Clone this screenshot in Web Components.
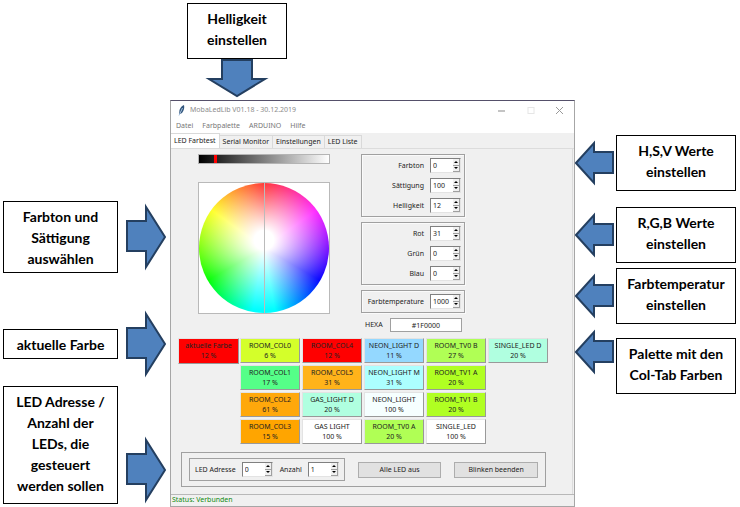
<!DOCTYPE html>
<html lang="de">
<head>
<meta charset="utf-8">
<title>MobaLedLib Farbtest</title>
<style>
  html, body { margin: 0; background: #fff; }
  body { font-family: "Noto Sans", "Open Sans", sans-serif; }
</style>
</head>
<body>
<guide-page></guide-page>
<script>
const define = (name, html, setup) => customElements.define(name, class extends HTMLElement {
  connectedCallback() {
    if (this.shadowRoot) return;
    const root = this.attachShadow({ mode: "open" });
    root.innerHTML = "<style>*{box-sizing:border-box}</style>" +
      (typeof html === "function" ? html(this) : html);
    if (setup) setup(this, root);
  }
});

/* Block arrow; direction is right, left or down */
define("block-arrow", el => {
  const shapes = {
    right: [42, 68, "2,18 21,18 21,4 40,34 21,64 21,48 2,48"],
    left: [40, 47, "38,12 19,12 19,3 1,23 19,43 19,33 38,33"],
    down: [66, 39, "18,1 48,1 48,20 61,20 33,37 5,20 18,20"]
  };
  const [w, h, points] = shapes[el.getAttribute("direction")];
  return `<style>:host{display:block;flex:none}svg{display:block}</style>
  <svg width="${w}" height="${h}" viewBox="0 0 ${w} ${h}" aria-hidden="true">
    <polygon points="${points}" fill="#4f81bd" stroke="#243f60" stroke-width="2"/>
  </svg>`;
});

define("note-box", `<style>
  :host{display:block;box-sizing:border-box;border:1px solid #000;background:#fff;padding:4px 2px 3px;
    font:700 14px/21px Lato,sans-serif;color:#000;text-align:center}
  </style><slot></slot>`);

define("spin-box", el => `<style>
  :host{display:grid;grid-template-columns:1fr 31px;column-gap:6px;align-items:center}
  label{text-align:right;white-space:nowrap}
  .box{display:flex;height:15px;background:#fff;border:1px solid;border-color:#808080 #e3e3e3 #e3e3e3 #808080}
  input{flex:1;min-width:0;width:0;border:0;padding:0 0 0 2px;background:none;font:inherit;color:inherit;outline:0}
  .steps{display:flex;flex-direction:column;width:7px;flex:none}
  button{flex:1;display:flex;align-items:center;justify-content:center;min-height:0;padding:0;border:0;
    border-right:1px solid #a0a0a0;border-bottom:1px solid #a0a0a0;background:#f0f0f0}
  svg{display:block}
  </style>
  <label for="v">${el.getAttribute("label")}</label>
  <span class="box"><input id="v" inputmode="numeric" value="${el.getAttribute("value")}">
  <span class="steps">
    <button type="button" aria-label="Erhöhen"><svg width="4" height="2"><path d="M0 2L2 0L4 2z"/></svg></button>
    <button type="button" aria-label="Verringern"><svg width="4" height="2"><path d="M0 0L2 2L4 0z"/></svg></button>
  </span></span>`,
  (el, root) => {
    const input = root.querySelector("input");
    root.querySelectorAll("button").forEach((b, i) =>
      b.addEventListener("click", () => { input.value = Math.max(0, Number(input.value) + (i ? -1 : 1)); }));
  });

define("field-group", `<style>
  :host{display:flex;flex-direction:column;gap:5px;border:1px solid #a0a0a0;padding:3px;
    box-shadow:inset 1px 1px #fafafa,1px 1px #fafafa}
  </style><slot></slot>`);

define("color-tile", el => `<style>
  :host{display:grid}
  button{font:inherit;color:#222;line-height:10px;padding:0;border:1px solid;
    border-color:#e3e3e3 #999 #999 #e3e3e3;background:${el.getAttribute("color")};white-space:nowrap;overflow:hidden}
  span{display:block}
  </style>
  <button type="button"><span>${el.getAttribute("name")}</span><span>${el.getAttribute("level")} %</span></button>`);

define("brightness-bar", `<style>
  :host{display:block}
  input{display:block;appearance:none;width:100%;height:10px;margin:0;border:1px solid #b4b4b4;
    background:linear-gradient(90deg,#000,#fff)}
  input::-webkit-slider-thumb{appearance:none;width:3px;height:8px;background:#f00;border:0}
  </style><input type="range" min="0" max="100" value="12" aria-label="Helligkeit">`);

define("color-wheel", `<style>
  :host{display:block;aspect-ratio:1;background:#fff;border:1px solid #b9b9b9}
  div{height:100%;border-radius:50%;
    background:linear-gradient(#bbb,#bbb) center/1px 100% no-repeat,
      radial-gradient(circle 70px at 50% 44%,#fff 14%,transparent 100%),
      conic-gradient(#f00,#f0f 54deg,#00f 120deg,#0ff 170deg,#0ff 190deg,#0f0 240deg,#ff0 306deg,#f00)}
  </style><div role="img" aria-label="Farbkreis"></div>`);

define("title-bar", `<style>
  :host{display:flex;align-items:center;height:18px;padding:0 10px 0 7px;background:#fff;color:#8c8c8c}
  span{flex:1;padding-left:5px}
  .controls{display:flex;gap:19px}
  button{border:0;padding:0;background:none;display:block}
  svg{display:block}
  </style>
  <svg width="7" height="11" viewBox="0 0 7 11"><path d="M1 10L1.500 5Q3 1 6 0Q7 4 4 8L2 9z" fill="#31557c"/><path d="M1 10.500L4.500 3" stroke="#a9c3df" fill="none"/></svg>
  <span>MobaLedLib V01.18 - 30.12.2019</span>
  <div class="controls">
    <button type="button" aria-label="Minimieren"><svg width="10" height="9"><path d="M1 5h7" stroke="#c4c4c4" stroke-width="2"/></svg></button>
    <button type="button" aria-label="Maximieren"><svg width="10" height="9"><rect x="2" y="1.500" width="6" height="6" fill="none" stroke="#e6e6e6"/></svg></button>
    <button type="button" aria-label="Schließen"><svg width="9" height="9"><path d="M1 1L8 8M8 1L1 8" stroke="#999"/></svg></button>
  </div>`);

define("menu-bar", `<style>
  :host{display:flex;gap:9px;height:14px;padding-left:5px;background:#fff}
  button{border:0;padding:0;background:none;font:inherit;color:#777}
  </style>
  <button type="button">Datei</button><button type="button">Farbpalette</button>
  <button type="button">ARDUINO</button><button type="button">Hilfe</button>`);

define("tab-strip", `<style>
  :host{display:flex;align-items:flex-end;height:16px;border-bottom:1px solid #dcdcdc}
  button{height:13px;padding:0 3px;border:1px solid #d9d9d9;border-left:0;border-bottom:0;
    background:#f0f0f0;font:inherit;line-height:12px;color:#1c1c1c}
  [aria-selected=true]{height:15px;background:#fff}
  </style>
  <button type="button" role="tab" aria-selected="true">LED Farbtest</button>
  <button type="button" role="tab" aria-selected="false">Serial Monitor</button>
  <button type="button" role="tab" aria-selected="false">Einstellungen</button>
  <button type="button" role="tab" aria-selected="false">LED Liste</button>`);

define("hex-field", `<style>
  :host{display:flex;align-items:center;gap:7px;padding:0 3px 0 4px}
  input{flex:1;min-width:0;height:14px;padding:0;border:1px solid #a0a0a0;background:#fff;
    font:inherit;color:inherit;text-align:center}
  </style><label for="h">HEXA</label><input id="h" value="#1F0000">`);

define("color-palette", () => {
  const colors = [
    ["ROOM_COL0", 6, "#d4ff2a"], ["ROOM_COL1", 17, "#55ff88"], ["ROOM_COL2", 61, "#ffa80b"], ["ROOM_COL3", 15, "#ffa500"],
    ["ROOM_COL4", 12, "#ff0000"], ["ROOM_COL5", 31, "#ffb31a"], ["GAS_LIGHT D", 20, "#b0ffe0"], ["GAS LIGHT", 100, "#ffffff"],
    ["NEON_LIGHT D", 11, "#94d8ff"], ["NEON_LIGHT M", 31, "#acffff"], ["NEON_LIGHT", 100, "#f6ffff"], ["ROOM_TV0 A", 20, "#b0ff55"],
    ["ROOM_TV0 B", 27, "#b0ff55"], ["ROOM_TV1 A", 20, "#b0ff22"], ["ROOM_TV1 B", 20, "#b0ff22"], ["SINGLE_LED", 100, "#ffffff"],
    ["SINGLE_LED D", 20, "#b0ffe0"]
  ];
  return `<style>
  :host{display:flex;align-items:flex-start;gap:1px}
  .current{flex:none;width:61px;height:26px}
  .grid{display:grid;grid-auto-flow:column;grid-template-rows:repeat(4,25px);grid-auto-columns:60px;gap:2px}
  </style>
  <color-tile class="current" name="aktuelle Farbe" level="12" color="#ff0000"></color-tile>
  <div class="grid">${colors.map(([n, l, c]) => `<color-tile name="${n}" level="${l}" color="${c}"></color-tile>`).join("")}</div>`;
});

define("led-controls", `<style>
  :host{display:flex;align-items:center;border:1px solid #a0a0a0;padding:5px 7px;gap:13px}
  .address{display:flex;gap:7px;border:1px solid #a0a0a0;padding:3px 5px}
  button{flex:1;height:16px;padding:0;border:1px solid #adadad;background:#e1e1e1;font:inherit;color:inherit}
  </style>
  <div class="address"><spin-box label="LED Adresse" value="0"></spin-box><spin-box label="Anzahl" value="1"></spin-box></div>
  <button type="button">Alle LED aus</button><button type="button">Blinken beenden</button>`);

define("app-window", `<style>
  :host{display:flex;flex-direction:column;box-sizing:border-box;min-width:0;border:1px solid #a6a6a6;border-top-color:#55506a;
    background:#f0f0f0;font-size:7px;line-height:10px;color:#1c1c1c}
  .pane{flex:1;padding:5px 26px 7px 7px;border-right:1px solid #dcdcdc;margin-right:1px}
  .top{display:grid;grid-template-columns:132px 104px;column-gap:31px;padding-left:20px}
  .picker{display:flex;flex-direction:column;gap:18px}
  .values{display:flex;flex-direction:column;gap:5px}
  color-palette{margin:6px 0 8px}
  led-controls{margin-left:3px}
  .status{border-top:1px solid #b8b8b8;padding:0 1px 1px;color:#108a10}
  </style>
  <title-bar></title-bar><menu-bar></menu-bar><tab-strip></tab-strip>
  <div class="pane">
    <div class="top">
      <div class="picker"><brightness-bar></brightness-bar><color-wheel></color-wheel></div>
      <div class="values">
        <field-group><spin-box label="Farbton" value="0"></spin-box><spin-box label="Sättigung" value="100"></spin-box><spin-box label="Helligkeit" value="12"></spin-box></field-group>
        <field-group><spin-box label="Rot" value="31"></spin-box><spin-box label="Grün" value="0"></spin-box><spin-box label="Blau" value="0"></spin-box></field-group>
        <field-group><spin-box label="Farbtemperature" value="1000"></spin-box></field-group>
        <hex-field></hex-field>
      </div>
    </div>
    <color-palette></color-palette>
    <led-controls></led-controls>
  </div>
  <div class="status">Status: Verbunden</div>`);

define("guide-page", `<style>
  :host{display:grid;grid-template-columns:170px minmax(0,1fr) 165px;grid-template-rows:100px auto}
  .left,.right{grid-row:1/3;display:flex;flex-direction:column}
  .left{grid-column:1;padding:201px 3px 0}
  .right{grid-column:3;padding-top:135px}
  .above{grid-column:2;grid-row:1;padding:3px 17px 0;display:flex;flex-direction:column;align-items:center;width:134px}
  .above note-box{width:100px;min-height:56px}
  app-window{grid-column:2;grid-row:2}
  .row{display:flex;align-items:center}
  .left .row{gap:7px}
  .left note-box{width:115px}
  .left .row:nth-child(2){margin:37px 0 8px}
  .left .row:nth-child(3){align-items:flex-end}
  .left .row:nth-child(3) note-box{min-height:118px}
  .right .row{gap:1px}
  .right note-box{width:120px;min-height:56px}
  .right .row:nth-child(2){margin:16px 0 5px}
  .right .row:nth-child(4){align-items:flex-start;margin-top:5px}
  .right .row:nth-child(4) note-box{margin-top:9px}
  </style>
  <div class="left">
    <div class="row"><note-box>Farbton und<br>Sättigung<br>auswählen</note-box><block-arrow direction="right"></block-arrow></div>
    <div class="row"><note-box>aktuelle Farbe</note-box><block-arrow direction="right"></block-arrow></div>
    <div class="row"><note-box>LED Adresse /<br>Anzahl der<br>LEDs, die<br>gesteuert<br>werden sollen</note-box><block-arrow direction="right"></block-arrow></div>
  </div>
  <div class="above"><note-box>Helligkeit<br>einstellen</note-box><block-arrow direction="down"></block-arrow></div>
  <app-window></app-window>
  <div class="right">
    <div class="row"><block-arrow direction="left"></block-arrow><note-box>H,S,V Werte<br>einstellen</note-box></div>
    <div class="row"><block-arrow direction="left"></block-arrow><note-box>R,G,B Werte<br>einstellen</note-box></div>
    <div class="row"><block-arrow direction="left"></block-arrow><note-box>Farbtemperatur<br>einstellen</note-box></div>
    <div class="row"><block-arrow direction="left"></block-arrow><note-box>Palette mit den<br>Col-Tab Farben</note-box></div>
  </div>`);
</script>
</body>
</html>
